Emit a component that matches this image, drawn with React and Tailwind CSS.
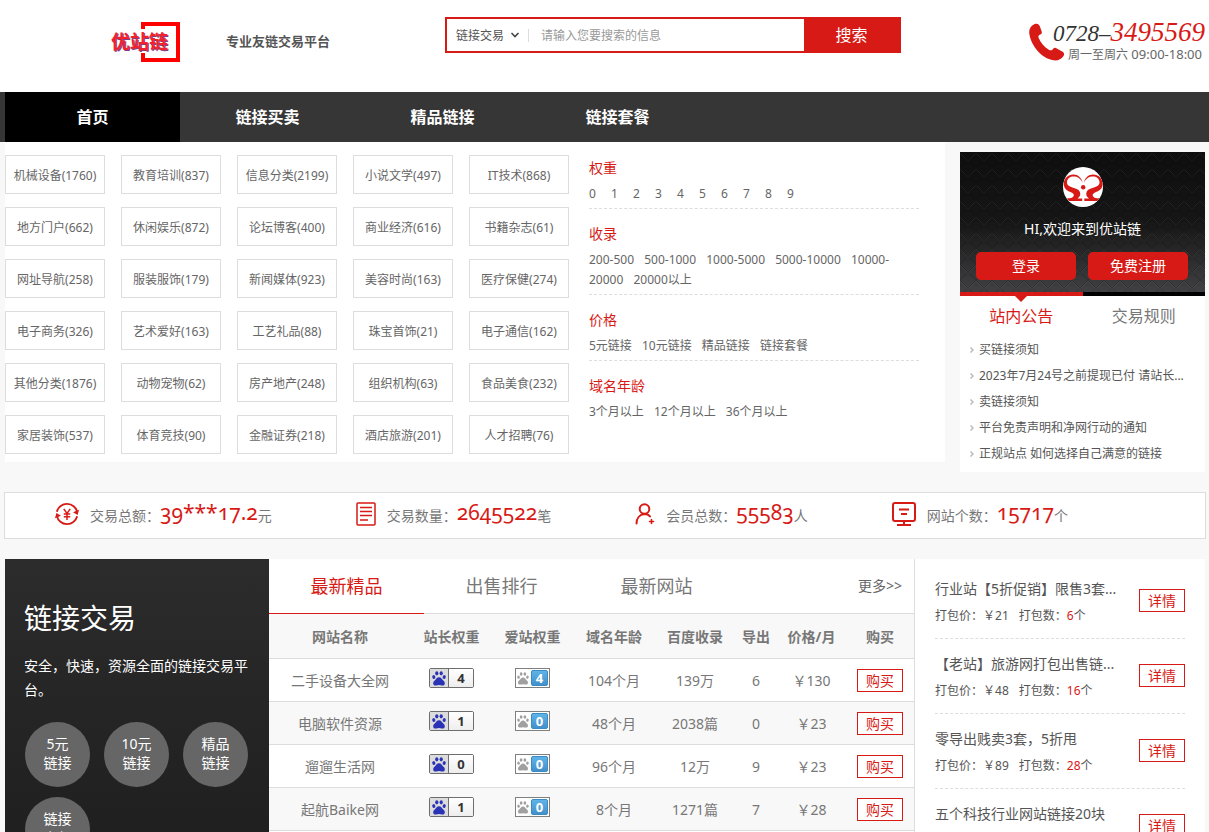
import React from "react";

const NAV = ["首页", "链接买卖", "精品链接", "链接套餐"];

const CATEGORIES = [
  "机械设备(1760)", "教育培训(837)", "信息分类(2199)", "小说文学(497)", "IT技术(868)",
  "地方门户(662)", "休闲娱乐(872)", "论坛博客(400)", "商业经济(616)", "书籍杂志(61)",
  "网址导航(258)", "服装服饰(179)", "新闻媒体(923)", "美容时尚(163)", "医疗保健(274)",
  "电子商务(326)", "艺术爱好(163)", "工艺礼品(88)", "珠宝首饰(21)", "电子通信(162)",
  "其他分类(1876)", "动物宠物(62)", "房产地产(248)", "组织机构(63)", "食品美食(232)",
  "家居装饰(537)", "体育竞技(90)", "金融证券(218)", "酒店旅游(201)", "人才招聘(76)",
];

const FILTERS = [
  { title: "权重", wide: true, options: ["0", "1", "2", "3", "4", "5", "6", "7", "8", "9"] },
  { title: "收录", options: ["200-500", "500-1000", "1000-5000", "5000-10000", "10000-20000", "20000以上"] },
  { title: "价格", options: ["5元链接", "10元链接", "精品链接", "链接套餐"] },
  { title: "域名年龄", options: ["3个月以上", "12个月以上", "36个月以上"] },
];

const NEWS = [
  "买链接须知",
  "2023年7月24号之前提现已付 请站长...",
  "卖链接须知",
  "平台免责声明和净网行动的通知",
  "正规站点 如何选择自己满意的链接",
];

const COLUMNS = ["网站名称", "站长权重", "爱站权重", "域名年龄", "百度收录", "导出", "价格/月", "购买"];

const SITES = [
  ["二手设备大全网", "4", "4", "104个月", "139万", "6", "￥130"],
  ["电脑软件资源", "1", "0", "48个月", "2038篇", "0", "￥23"],
  ["遛遛生活网", "0", "0", "96个月", "12万", "9", "￥23"],
  ["起航Baike网", "1", "0", "8个月", "1271篇", "7", "￥28"],
];

const PACKS = [
  ["行业站【5折促销】限售3套...", "￥21", "6"],
  ["【老站】旅游网打包出售链...", "￥48", "16"],
  ["零导出贱卖3套，5折甩", "￥89", "28"],
  ["五个科技行业网站链接20块", "￥20", "5"],
];

const CIRCLES = [["5元", "链接"], ["10元", "链接"], ["精品", "链接"], ["链接", "套餐"]];

function Paw({ className }) {
  return (
    <svg viewBox="0 0 14 15" className={className} fill="currentColor" aria-hidden="true">
      <ellipse cx="1.8" cy="6" rx="1.5" ry="1.9" transform="rotate(-15 1.8 6)" />
      <ellipse cx="4.8" cy="2.3" rx="1.6" ry="2.1" />
      <ellipse cx="9.2" cy="2.3" rx="1.6" ry="2.1" />
      <ellipse cx="12.2" cy="6" rx="1.5" ry="1.9" transform="rotate(15 12.2 6)" />
      <path d="M7 6.2c2.2 0 2.7 1.8 4 3.1 1.2 1.2 2 1.9 1.8 3.4-.2 1.4-1.4 2-2.9 1.8-1-.1-1.8-.4-2.9-.4s-1.9.3-2.9.4C2.6 14.7 1.4 14.1 1.2 12.7 1 11.2 1.8 10.5 3 9.3 4.3 8 4.8 6.2 7 6.2z" />
    </svg>
  );
}

function ChinazBadge({ value }) {
  return (
    <span className="inline-flex h-5 w-[45px] overflow-hidden rounded-xs border border-[#6e6e6e] align-middle">
      <span className="flex w-[19px] items-center justify-center border-r border-[#6e6e6e] bg-[#dcdcdc]">
        <Paw className="h-[15px] w-[14px] text-[#2a33b5]" />
      </span>
      <span className="flex flex-1 items-center justify-center bg-gradient-to-b from-white to-[#eeeeee] text-[13px] leading-[18px] font-bold text-[#333]">
        {value}
      </span>
    </span>
  );
}

function AizhanBadge({ value }) {
  return (
    <span className="inline-flex h-5 w-[35px] items-center justify-between border border-[#808080] bg-white px-px align-middle">
      <Paw className="h-[13px] w-[12px] text-[#a0a0a0]" />
      <span className="flex h-4 w-[17px] items-center justify-center rounded-xs border border-[#3a8cc4] bg-gradient-to-b from-[#5fb4e6] to-[#4390cc] text-[13px] leading-[14px] font-bold text-white">
        {value}
      </span>
    </span>
  );
}

function HeartLogo() {
  const half =
    "M19.7 16C18.5 10.500 15 7.500 10.500 7.500 5 7.500 .8 11.500 .8 16.500 .8 21.500 3.500 23.500 7.500 25 10.500 26.200 11.500 27.500 10.500 29.200 9.700 30.500 8.500 31.200 6.500 31.200L4 31.200 6 34 19.200 34 19.200 31.400 14.500 31.400C17 30 18 27.500 16.800 24.800 15.500 22 12.500 21.500 9.500 20.500 6 19.300 3.800 18 4 15.200 4.300 11.500 7 9.600 10.500 9.600 14.500 9.600 17.500 11.500 19.700 16z";
  return (
    <svg viewBox="0 0 40 40" className="size-10 rounded-full bg-white" aria-hidden="true">
      <g fill="#d71a16">
        <path d={half} />
        <path d={half} transform="translate(40.5 0) scale(-1 1)" />
        <circle cx="20.2" cy="20.3" r="2.2" />
      </g>
    </svg>
  );
}

function DiamondTexture() {
  return (
    <svg className="absolute inset-0 size-full" aria-hidden="true">
      <defs>
        <pattern id="diamonds" width="16" height="16" patternUnits="userSpaceOnUse">
          <path d="M0 0l8 8 8-8M0 16l8-8 8 8" fill="none" stroke="#000" strokeOpacity=".2" />
          <path d="M0 1l8 8 8-8" fill="none" stroke="#fff" strokeOpacity=".06" />
        </pattern>
      </defs>
      <rect width="100%" height="100%" fill="url(#diamonds)" />
    </svg>
  );
}

function YenIcon() {
  return (
    <svg viewBox="0 0 26 26" className="size-6" fill="none" stroke="#d71a16" strokeWidth="2" aria-hidden="true">
      <path d="M2 10.500A11.300 11.300 0 0 1 24 11M24 15.500A11.300 11.300 0 0 1 2 15" />
      <path d="M26 8.500l-1.500 5.500-5-3zM0 17.500L1.500 12l5 3z" fill="#d71a16" stroke="none" />
      <path d="M9.500 7.500l3.500 5 3.500-5M13 12.500v7M9.500 13h7M9.500 16h7" strokeWidth="1.600" />
    </svg>
  );
}

function DocIcon() {
  return (
    <svg viewBox="0 0 20 24" className="h-6 w-5" fill="none" stroke="#d71a16" strokeWidth="1.5" aria-hidden="true">
      <rect x="1" y="1" width="18" height="22" rx="1" />
      <path d="M4 5.500h12M4 9.500h12M4 13.500h12M4 18h8" />
    </svg>
  );
}

function MemberIcon() {
  return (
    <svg viewBox="0 0 20 22" className="h-[22px] w-5" fill="none" stroke="#d71a16" strokeWidth="2" strokeLinecap="round" aria-hidden="true">
      <circle cx="9.5" cy="6" r="4.8" />
      <path d="M1.500 20.500c0-5 3-9 8-9.500 2.500 0 4.500 1 5.500 2.500" />
      <path d="M16.500 16.500v4M14.500 18.500h4" strokeWidth="1.600" />
    </svg>
  );
}

function ScreenIcon() {
  return (
    <svg viewBox="0 0 24 24" className="size-6" fill="none" stroke="#d71a16" strokeWidth="2" aria-hidden="true">
      <rect x="1" y="1" width="22" height="18" rx="2" />
      <path d="M7 7.500h10M9 12h6M12 19v4M5 23h14" />
    </svg>
  );
}

const STATS = [
  { icon: YenIcon, label: "交易总额：", value: "39***17.2", unit: "元" },
  { icon: DocIcon, label: "交易数量：", value: "2645522", unit: "笔" },
  { icon: MemberIcon, label: "会员总数：", value: "55583", unit: "人" },
  { icon: ScreenIcon, label: "网站个数：", value: "15717", unit: "个" },
];

function Header() {
  return (
    <header className="flex h-[92px] items-start bg-white pr-1 pl-[111px]">
      <a href="#" className="relative mt-[22px] flex h-10 w-[69px] items-center" aria-label="优站链">
        <svg viewBox="0 0 39 40" className="absolute top-0 right-0 h-10 w-[39px]" fill="none" stroke="#fe0000" strokeWidth="4" aria-hidden="true">
          <path d="M2 7V2h35v36H2v-7" />
        </svg>
        <span className="relative text-[19px] leading-6 font-bold whitespace-nowrap text-[#f2222c] [text-shadow:1px_1px_0_#7a3f86]">优站链</span>
      </a>
      <p className="mt-[29px] ml-[46px] text-[13px] leading-6 font-bold text-[#555]">专业友链交易平台</p>
      <form className="mt-[17px] ml-[115px] flex h-9 w-[456px] border-2 border-[#d71a16]" onSubmit={(e) => e.preventDefault()}>
        <label className="flex items-center pl-[9px]">
          <select aria-label="搜索类型" className="w-[50px] appearance-none pt-0.5 text-xs text-[#555] outline-none">
            <option>链接交易</option>
          </select>
          <svg viewBox="0 0 10 6" className="ml-1 h-[6px] w-[10px]" fill="none" stroke="#444" strokeWidth="1.6" aria-hidden="true">
            <path d="M1.500 1L5 4.500 8.500 1" />
          </svg>
        </label>
        <span className="mt-[10px] ml-2 h-[13px] w-px bg-[#ddd]" />
        <input aria-label="搜索" placeholder="请输入您要搜索的信息" className="min-w-0 flex-1 px-3 pt-0.5 text-xs outline-none placeholder:text-[#999]" />
        <button className="w-[95px] bg-[#d71a16] text-base text-white">搜索</button>
      </form>
      <div className="mt-[22px] ml-auto flex">
        <svg viewBox="0 0 36 38" className="mt-px -mr-3 h-[38px] w-9" fill="#d71a16" aria-hidden="true">
          <path d="M6.500.8c2-.6 3.600.4 4.200 2.200l1.900 5.200c.6 1.600.1 2.600-1.500 3.400-1.800 1-2 1.800-1.300 3.600 2.200 5.200 5.400 8.600 10 11.500 1.700 1 2.700.9 4-.5 1.300-1.500 2.300-1.700 4-.8l5.400 3c2 1.200 2.500 2.700 1.300 4.600-2.300 3.400-6 5-10 4.300C12.500 35.500 1.800 22.300.3 10.500-.3 5.800 2.500 2 6.500.8z" />
        </svg>
        <div className="text-right">
          <p className="h-6 font-['Liberation_Serif',serif] text-[27px] leading-5 whitespace-nowrap text-[#d71a16] italic">
            <span className="text-[23px] text-[#333]">0728–</span>3495569
          </p>
          <p className="pr-[3px] text-[13px] leading-4 whitespace-nowrap text-[#666]">
            <span className="text-xs">周一至周六</span> 09:00-18:00
          </p>
        </div>
      </div>
    </header>
  );
}

function Categories() {
  return (
    <section className="flex flex-1 bg-white pb-2">
      <div className="mt-[13px] grid grid-cols-[repeat(5,100px)] content-start gap-x-4 gap-y-[13px]">
        {CATEGORIES.map((c) => (
          <a key={c} href="#" className="flex h-[39px] items-center justify-center border border-[#ddd] pt-0.5 text-xs whitespace-nowrap text-[#666]">{c}</a>
        ))}
      </div>
      <div className="mt-px mr-[26px] ml-5 flex-1">
        {FILTERS.map((f) => (
          <div key={f.title} className="border-b border-dashed border-[#ddd] pt-[15px] pb-1 last:border-b-0">
            <h3 className="text-sm leading-5 text-[#d71a16]">{f.title}</h3>
            <p className="mt-[6px] text-xs leading-5 text-[#666]">
              {f.options.map((o) => (
                <React.Fragment key={o}>
                  <a href="#" className={f.wide ? "mr-3" : "mr-[7px]"}>{o}</a>{" "}
                </React.Fragment>
              ))}
            </p>
          </div>
        ))}
      </div>
    </section>
  );
}

function LoginCard() {
  return (
    <aside className="mt-[10px] w-[245px] shrink-0 bg-white pb-[5px]">
      <div className="relative bg-gradient-to-b from-[#0e0e0e] via-[#161616] to-[#414144]">
        <DiamondTexture />
        <div className="relative flex flex-col items-center px-4 pt-[15px] pb-3">
          <HeartLogo />
          <p className="mt-3 text-sm leading-5 text-white">HI,欢迎来到优站链</p>
          <div className="mt-[13px] flex w-full gap-3">
            <a href="#" className="h-7 w-[100px] rounded-[5px] bg-[#d71a16] text-center text-sm leading-7 text-white">登录</a>
            <a href="#" className="h-7 w-[100px] rounded-[5px] bg-[#d71a16] text-center text-sm leading-7 text-white">免费注册</a>
          </div>
        </div>
      </div>
      <div className="flex text-base leading-10">
        <button className="relative flex-1 border-t-4 border-[#d71a16] text-[#d71a16]">
          <svg viewBox="0 0 12 6" className="absolute top-0 left-[55px] h-[6px] w-3" fill="#d71a16" aria-hidden="true">
            <path d="M0 0h12L6 6z" />
          </svg>
          站内公告
        </button>
        <button className="flex-1 border-t-4 border-black text-[#777]">交易规则</button>
      </div>
      <ul className="px-[10px] pt-px">
        {NEWS.map((n) => (
          <li key={n} className="flex items-center gap-[5px]">
            <svg viewBox="0 0 4 6" className="h-[6px] w-1 shrink-0" fill="none" stroke="#bbb" strokeWidth="1.5" aria-hidden="true">
              <path d="M.5.5L3 3 .5 5.500" />
            </svg>
            <a href="#" className="text-xs leading-[26px] whitespace-nowrap text-[#555]">{n}</a>
          </li>
        ))}
      </ul>
    </aside>
  );
}

function Stats() {
  return (
    <ul className="-mx-px mt-5 flex h-[47px] gap-x-[84px] border border-[#ddd] bg-white pl-[50px] text-sm text-[#777]">
      {STATS.map(({ icon: Icon, label, value, unit }) => (
        <li key={label} className="flex items-center whitespace-nowrap">
          <span className="pb-1"><Icon /></span>
          <span className="ml-[11px]">{label}</span>
          <b className="pb-2 font-['Noto_Sans',sans-serif] text-[21px] leading-8 font-normal text-[#d71a16] oldstyle-nums">{value}</b>
          <span>{unit}</span>
        </li>
      ))}
    </ul>
  );
}

function SiteTable() {
  return (
    <section className="min-w-0 flex-1 border-r border-[#ddd] bg-white">
      <div className="flex h-[55px] border-b border-[#ddd] text-lg text-[#777]">
        <button className="h-[55px] w-[155px] border-b border-[#d71a16] text-[#d71a16]">最新精品</button>
        <button className="w-[155px]">出售排行</button>
        <button className="w-[155px]">最新网站</button>
        <a href="#" className="mr-3 ml-auto text-sm leading-[54px] text-[#666]">更多&gt;&gt;</a>
      </div>
      <table className="w-full table-fixed text-center text-sm text-[#777]">
        <colgroup>
          <col className="w-[142px]" />
          <col className="w-[81px]" />
          <col className="w-[81px]" />
          <col className="w-[82px]" />
          <col className="w-[80px]" />
          <col className="w-[42px]" />
          <col className="w-[69px]" />
          <col className="w-[68px]" />
        </colgroup>
        <thead>
          <tr className="h-11 border-b border-[#ddd] bg-[#f8f8f8]">
            {COLUMNS.map((c) => (
              <th key={c} className="p-0 pt-0.5 font-bold whitespace-nowrap">{c}</th>
            ))}
          </tr>
        </thead>
        <tbody>
          {SITES.map(([name, a, b, ...rest]) => (
            <tr key={name} className="h-[43px] border-b border-[#ddd] even:bg-[#f8f8f8]">
              <td className="pt-0.5"><a href="#">{name}</a></td>
              <td className="pb-1 leading-5"><ChinazBadge value={a} /></td>
              <td className="pb-1 leading-5"><AizhanBadge value={b} /></td>
              {rest.map((v, i) => (
                <td key={i} className="pt-0.5 whitespace-nowrap">{v}</td>
              ))}
              <td className="pt-0.5">
                <button className="h-[23px] w-[46px] border border-[#d71a16] bg-white align-middle text-sm leading-5 text-[#d71a16]">购买</button>
              </td>
            </tr>
          ))}
        </tbody>
      </table>
    </section>
  );
}

function Packs() {
  return (
    <aside className="w-[290px] shrink-0 bg-white px-5 pt-[5px]">
      {PACKS.map(([title, price, count]) => (
        <article key={title} className="flex justify-between border-b border-dashed border-[#ddd] pt-[11px] pb-[9px]">
          <div className="whitespace-nowrap text-[#555]">
            <h4 className="text-sm leading-7">{title}</h4>
            <p className="text-xs leading-[26px]">
              打包价：{price}<span className="ml-[10px]">打包数：<span className="text-[#d71a16]">{count}</span>个</span>
            </p>
          </div>
          <button className="mt-[14px] h-[23px] w-[46px] shrink-0 border border-[#d71a16] text-sm leading-5 text-[#d71a16]">详情</button>
        </article>
      ))}
    </aside>
  );
}

export default function App() {
  return (
    <div className="min-h-screen bg-[#f8f8f8] font-['Noto_Sans','Noto_Sans_CJK_SC',sans-serif]">
      <Header />
      <nav className="flex bg-[#363636] pl-[5px]">
        {NAV.map((n, i) => (
          <a
            key={n}
            href="#"
            className={
              i === 0
                ? "h-[50px] w-[175px] bg-black text-center text-base leading-[50px] font-bold text-white"
                : "h-[50px] w-[175px] text-center text-base leading-[50px] font-bold text-white"
            }
          >
            {n}
          </a>
        ))}
      </nav>
      <main className="pr-1 pl-[5px]">
        <div className="flex items-start gap-[15px]">
          <Categories />
          <LoginCard />
        </div>
        <Stats />
        <div className="mt-5 flex">
          <section className="w-[264px] shrink-0 bg-gradient-to-b from-[#2c2c2c] to-[#1e1e1e] px-[19px] pt-[38px] pb-2 text-white">
            <h2 className="text-[28px] leading-[42px]">链接交易</h2>
            <p className="mt-[15px] text-sm leading-6">安全，快速，资源全面的链接交易平台。</p>
            <div className="mt-5 ml-px flex flex-wrap gap-x-[14px] gap-y-[10px]">
              {CIRCLES.map(([top, bottom]) => (
                <a key={top} href="#" className="flex size-[65px] flex-col items-center justify-center rounded-full bg-[#666] pb-[3px] text-sm leading-[19px]">
                  <span>{top}</span>
                  <span>{bottom}</span>
                </a>
              ))}
            </div>
          </section>
          <SiteTable />
          <Packs />
        </div>
      </main>
    </div>
  );
}
